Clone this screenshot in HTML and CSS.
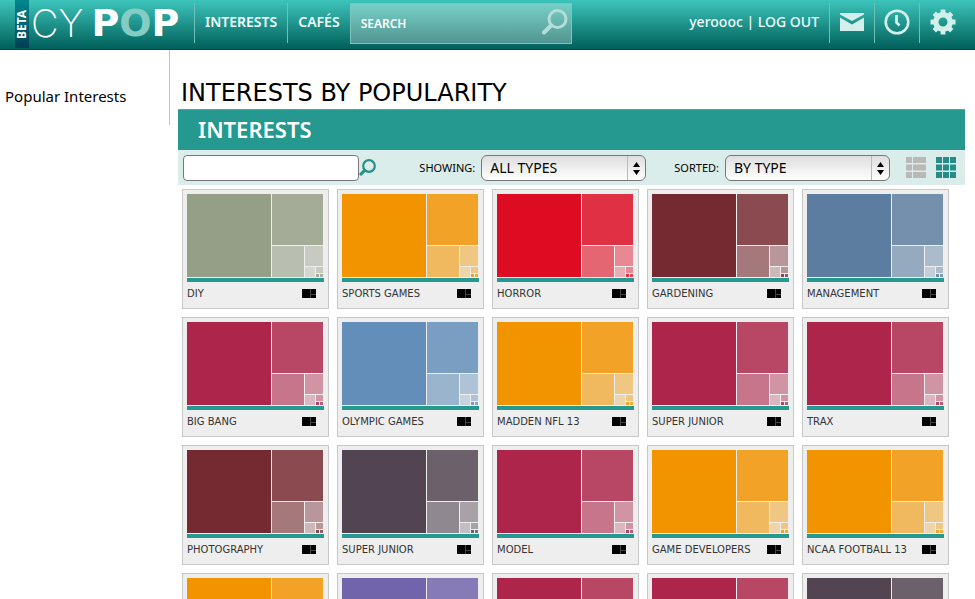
FILE: index.html
```html
<!DOCTYPE html>
<html lang="en">
<head>
    <meta charset="UTF-8">
    <meta name="viewport" content="width=device-width, initial-scale=1.0">
    <title>CYPOP - Interests</title>
    <link rel="stylesheet" href="styles.css">
</head>
<body>
    <!-- shared shapes -->
    <svg class="sprite" aria-hidden="true">
        <symbol id="treemap" viewBox="0 0 136 83">
            <rect width="84" height="83"/>
            <rect x="85" width="51" height="51" opacity=".84"/>
            <rect x="85" y="52" width="32" height="31" opacity=".6"/>
            <rect x="118" y="52" width="18" height="20" opacity=".45"/>
            <rect x="118" y="73" width="10" height="10" opacity=".28"/>
            <rect x="129" y="73" width="7" height="6" opacity=".45"/>
            <rect x="129" y="80" width="3" height="3" opacity=".85"/>
            <rect x="133" y="80" width="3" height="3" opacity=".75"/>
        </symbol>
        <symbol id="tiles" viewBox="0 0 14 9">
            <rect width="14" height="9" fill="#000"/>
            <path d="M8.5 0v9M8.5 5.5H14" stroke="#444" fill="none"/>
        </symbol>
        <symbol id="arrows" viewBox="0 0 7 13">
            <path d="M3.5 0L7 5H0zM3.5 13L0 8h7z"/>
        </symbol>
    </svg>

    <div class="page">
        <header class="topbar">
            <a class="logo" href="#">
                <span class="beta">BETA</span>
                <span class="thin">CY</span><span class="fat">P<span class="pale">O</span>P</span>
            </a>
            <nav class="nav">
                <a href="#">INTERESTS</a>
                <a href="#">CAFÉS</a>
            </nav>
            <form class="search">
                <input type="text" placeholder="SEARCH" aria-label="Search">
                <button type="submit" aria-label="Search">
                    <svg width="27" height="26" viewBox="0 0 27 26" fill="none" stroke="currentColor">
                        <circle cx="16.500" cy="10" r="8.500" stroke-width="3"/>
                        <path d="M10 16.500L3 23.500" stroke-width="4" stroke-linecap="round"/>
                    </svg>
                </button>
            </form>
            <div class="account">
                <a href="#">yeroooc</a> | <a href="#">LOG OUT</a>
            </div>
            <div class="tools">
                <button type="button" aria-label="Messages">
                    <svg width="24" height="18" viewBox="0 0 24 18" fill="currentColor">
                        <path d="M0 0h24v1.500L12 8 0 1.500z"/>
                        <path d="M0 4.500l12 7 12-7V18H0z"/>
                    </svg>
                </button>
                <button type="button" aria-label="History">
                    <svg width="26" height="26" viewBox="0 0 26 26" fill="none" stroke="currentColor">
                        <circle cx="13" cy="13" r="11.300" stroke-width="2.600"/>
                        <path d="M12.500 6v7.500l3 3" stroke-width="2.800"/>
                    </svg>
                </button>
                <button type="button" aria-label="Settings">
                    <svg width="26" height="26" viewBox="-13 -13 26 26" fill="none" stroke="currentColor">
                        <circle r="7.200" stroke-width="5.400"/>
                        <path d="M0-8v-4.500M0 8v4.500M8 0h4.500M-8 0h-4.500M5.700-5.700l3-3M-5.700-5.700l-3-3M5.700 5.700l3 3M-5.700 5.700l-3 3" stroke-width="4.800"/>
                    </svg>
                </button>
            </div>
        </header>

        <div class="layout">
            <aside class="sidebar">
                <a href="#">Popular Interests</a>
            </aside>

            <main class="content">
                <h1>INTERESTS BY POPULARITY</h1>
                <h2>INTERESTS</h2>

                <form class="filters">
                    <div class="find">
                        <input type="text" aria-label="Find an interest">
                        <button type="submit" aria-label="Find">
                            <svg width="17" height="17" viewBox="0 0 17 17" fill="none" stroke="currentColor">
                                <circle cx="10" cy="7" r="5.800" stroke-width="2.200"/>
                                <path d="M6 11l-5 5" stroke-width="3"/>
                            </svg>
                        </button>
                    </div>
                    <div class="field">
                        <label for="showing">SHOWING:</label>
                        <div class="picker">
                            <select id="showing"><option>ALL TYPES</option></select>
                            <svg width="7" height="13"><use href="#arrows"/></svg>
                        </div>
                    </div>
                    <div class="field sorted">
                        <label for="sorted">SORTED:</label>
                        <div class="picker">
                            <select id="sorted"><option>BY TYPE</option></select>
                            <svg width="7" height="13"><use href="#arrows"/></svg>
                        </div>
                    </div>
                    <div class="views">
                        <button type="button" aria-label="List view">
                            <svg width="20" height="21" viewBox="0 0 20 21" fill="currentColor">
                                <path d="M0 0h6v6H0zM7 0h13v6H7zM0 7.500h6v6H0zM7 7.500h13v6H7zM0 15h6v6H0zM7 15h13v6H7z"/>
                            </svg>
                        </button>
                        <button type="button" class="active" aria-label="Grid view">
                            <svg width="20" height="21" viewBox="0 0 20 21" fill="currentColor">
                                <path d="M0 0h6v6H0zM7 0h6v6H7zM14 0h6v6h-6zM0 7.500h6v6H0zM7 7.500h6v6H7zM14 7.500h6v6h-6zM0 15h6v6H0zM7 15h6v6H7zM14 15h6v6h-6z"/>
                            </svg>
                        </button>
                    </div>
                </form>

                <div class="grid">
                    <a class="card sage" href="#"><svg class="map"><use href="#treemap"/></svg><span class="name">DIY <svg><use href="#tiles"/></svg></span></a>
                    <a class="card orange" href="#"><svg class="map"><use href="#treemap"/></svg><span class="name">SPORTS GAMES <svg><use href="#tiles"/></svg></span></a>
                    <a class="card red" href="#"><svg class="map"><use href="#treemap"/></svg><span class="name">HORROR <svg><use href="#tiles"/></svg></span></a>
                    <a class="card maroon" href="#"><svg class="map"><use href="#treemap"/></svg><span class="name">GARDENING <svg><use href="#tiles"/></svg></span></a>
                    <a class="card steel" href="#"><svg class="map"><use href="#treemap"/></svg><span class="name">MANAGEMENT <svg><use href="#tiles"/></svg></span></a>

                    <a class="card crimson" href="#"><svg class="map"><use href="#treemap"/></svg><span class="name">BIG BANG <svg><use href="#tiles"/></svg></span></a>
                    <a class="card blue" href="#"><svg class="map"><use href="#treemap"/></svg><span class="name">OLYMPIC GAMES <svg><use href="#tiles"/></svg></span></a>
                    <a class="card orange" href="#"><svg class="map"><use href="#treemap"/></svg><span class="name">MADDEN NFL 13 <svg><use href="#tiles"/></svg></span></a>
                    <a class="card crimson" href="#"><svg class="map"><use href="#treemap"/></svg><span class="name">SUPER JUNIOR <svg><use href="#tiles"/></svg></span></a>
                    <a class="card crimson" href="#"><svg class="map"><use href="#treemap"/></svg><span class="name">TRAX <svg><use href="#tiles"/></svg></span></a>

                    <a class="card maroon" href="#"><svg class="map"><use href="#treemap"/></svg><span class="name">PHOTOGRAPHY <svg><use href="#tiles"/></svg></span></a>
                    <a class="card plum" href="#"><svg class="map"><use href="#treemap"/></svg><span class="name">SUPER JUNIOR <svg><use href="#tiles"/></svg></span></a>
                    <a class="card crimson" href="#"><svg class="map"><use href="#treemap"/></svg><span class="name">MODEL <svg><use href="#tiles"/></svg></span></a>
                    <a class="card orange" href="#"><svg class="map"><use href="#treemap"/></svg><span class="name">GAME DEVELOPERS <svg><use href="#tiles"/></svg></span></a>
                    <a class="card orange" href="#"><svg class="map"><use href="#treemap"/></svg><span class="name">NCAA FOOTBALL 13 <svg><use href="#tiles"/></svg></span></a>

                    <a class="card orange" href="#"><svg class="map"><use href="#treemap"/></svg></a>
                    <a class="card violet" href="#"><svg class="map"><use href="#treemap"/></svg></a>
                    <a class="card crimson" href="#"><svg class="map"><use href="#treemap"/></svg></a>
                    <a class="card crimson" href="#"><svg class="map"><use href="#treemap"/></svg></a>
                    <a class="card plum" href="#"><svg class="map"><use href="#treemap"/></svg></a>
                </div>
            </main>
        </div>
    </div>
</body>
</html>
```
FILE: styles.css
```css
* {
    box-sizing: border-box;
}

body {
    margin: 0;
    background: #fff;
    color: #000;
    font-family: "Noto Sans", "Open Sans", sans-serif;
}

a {
    color: inherit;
    text-decoration: none;
}

button {
    padding: 0;
    border: 0;
    background: none;
    color: inherit;
    cursor: pointer;
}

svg {
    display: block;
}

.sprite {
    display: none;
}

.page {
    height: 100vh;
    overflow: hidden;
}

/* top bar */
.topbar {
    display: flex;
    height: 50px;
    padding-left: 15px;
    border-bottom: 1px solid #0b4744;
    background: linear-gradient(#3dc5bb, #005f5a);
    color: #f0fffc;
    font-size: 14px;
    font-weight: 600;
}

.logo {
    display: flex;
    width: 179px;
    font-family: Inter, sans-serif;
    font-size: 38px;
    line-height: 46px;
}

.beta {
    width: 14px;
    height: 48px;
    margin-right: 2px;
    background: linear-gradient(#003f55, #008790);
    color: #fff;
    font-family: "Noto Sans", sans-serif;
    font-size: 12px;
    font-weight: 700;
    line-height: 14px;
    text-align: center;
    writing-mode: vertical-rl;
    transform: rotate(180deg);
}

.thin {
    font-weight: 200;
    color: #fff;
}

.fat {
    margin-left: 8px;
    font-family: "DejaVu Sans", sans-serif;
    font-weight: 700;
    color: #fff;
}

.pale {
    color: #85ccc5;
}

.nav {
    display: flex;
    padding-top: 3px;
}

.nav a {
    height: 40px;
    padding: 0 10px;
    border-left: 1px solid #6fc0b9;
    line-height: 38px;
}

.search {
    display: flex;
    align-items: center;
    width: 222px;
    height: 41px;
    margin-top: 3px;
    border: 1px solid #7cc5bf;
    background: linear-gradient(#76d0c8, #529590);
}

.search input {
    flex: 1;
    min-width: 0;
    padding: 0 10px;
    border: 0;
    background: none;
    color: #fff;
    font: 600 12px "Noto Sans", sans-serif;
}

.search input::placeholder {
    color: #fff;
    opacity: 1;
}

.search button {
    margin: 0 3px 4px 0;
    color: #b5dcd8;
}

.account {
    margin-left: auto;
    padding-right: 10px;
    font-weight: 500;
    line-height: 44px;
}

.tools {
    display: flex;
    padding-top: 3px;
}

.tools button {
    display: flex;
    align-items: center;
    justify-content: center;
    width: 45px;
    height: 40px;
    padding-bottom: 2px;
    border-left: 1px solid #6fc0b9;
    color: #d3efeb;
}

.tools button:last-child {
    width: 56px;
    padding-right: 10px;
}

/* page body */
.layout {
    display: flex;
}

.sidebar {
    flex: none;
    width: 170px;
    height: 75px;
    padding: 35px 0 0 5px;
    border-right: 1px solid #c4c4c4;
    font-size: 15px;
    line-height: 22px;
}

.content {
    flex: 1;
    padding: 0 10px 0 8px;
}

h1 {
    margin: 0;
    padding: 28px 0 0 3px;
    font-family: "DejaVu Sans", sans-serif;
    font-size: 24px;
    font-weight: 400;
    line-height: 31px;
}

h2 {
    margin: 0;
    padding: 0 0 2px 20px;
    border-top: 1px solid #5fa29d;
    background: #259990;
    color: #fff;
    font-size: 22px;
    font-weight: 600;
    line-height: 38px;
}

.filters {
    display: flex;
    align-items: center;
    height: 35px;
    padding: 0 9px 0 5px;
    background: #daedeb;
}

.find {
    display: flex;
    align-items: center;
    color: #259088;
}

.find input {
    width: 176px;
    height: 26px;
    border: 1px solid #777;
    border-radius: 4px;
    background: #fff;
}

.field {
    display: flex;
    align-items: center;
    gap: 6px;
    margin-left: auto;
    font-size: 11px;
}

.picker {
    position: relative;
}

.picker select {
    width: 165px;
    height: 26px;
    padding: 0 8px;
    border: 1px solid #777;
    border-radius: 6px;
    appearance: none;
    background: linear-gradient(90deg, transparent 145px, #bbb 145px, #bbb 146px, transparent 146px), linear-gradient(#dedede, #fff);
    color: #000;
    font: 14px "Noto Sans", sans-serif;
}

.picker svg {
    position: absolute;
    top: 7px;
    right: 6px;
    pointer-events: none;
}

.sorted {
    margin-left: 28px;
}

.views {
    display: flex;
    gap: 10px;
    margin-left: 16px;
    color: #b9b9b9;
}

.views .active {
    color: #268c87;
}

/* interest cards */
.grid {
    display: grid;
    grid-template-columns: repeat(auto-fill, 147px);
    gap: 8px;
    padding: 4px 0 0 4px;
}

.card {
    height: 120px;
    padding: 4px;
    border: 1px solid #c8c8c8;
    background: #eee;
}

.map {
    width: 136px;
    height: 83px;
    fill: currentColor;
}

.name {
    display: flex;
    align-items: center;
    justify-content: space-between;
    margin-top: 1px;
    padding-right: 8px;
    border-top: 4px solid #259990;
    color: #333;
    font-family: "DejaVu Sans", sans-serif;
    font-size: 10px;
    line-height: 23px;
    white-space: nowrap;
}

.name svg {
    width: 14px;
    height: 9px;
}

.sage { color: #959e87; }
.orange { color: #f29400; }
.red { color: #dd0c22; }
.maroon { color: #752a31; }
.steel { color: #5c7da0; }
.crimson { color: #ad254a; }
.blue { color: #628eb9; }
.plum { color: #524451; }
.violet { color: #7264ab; }
```
